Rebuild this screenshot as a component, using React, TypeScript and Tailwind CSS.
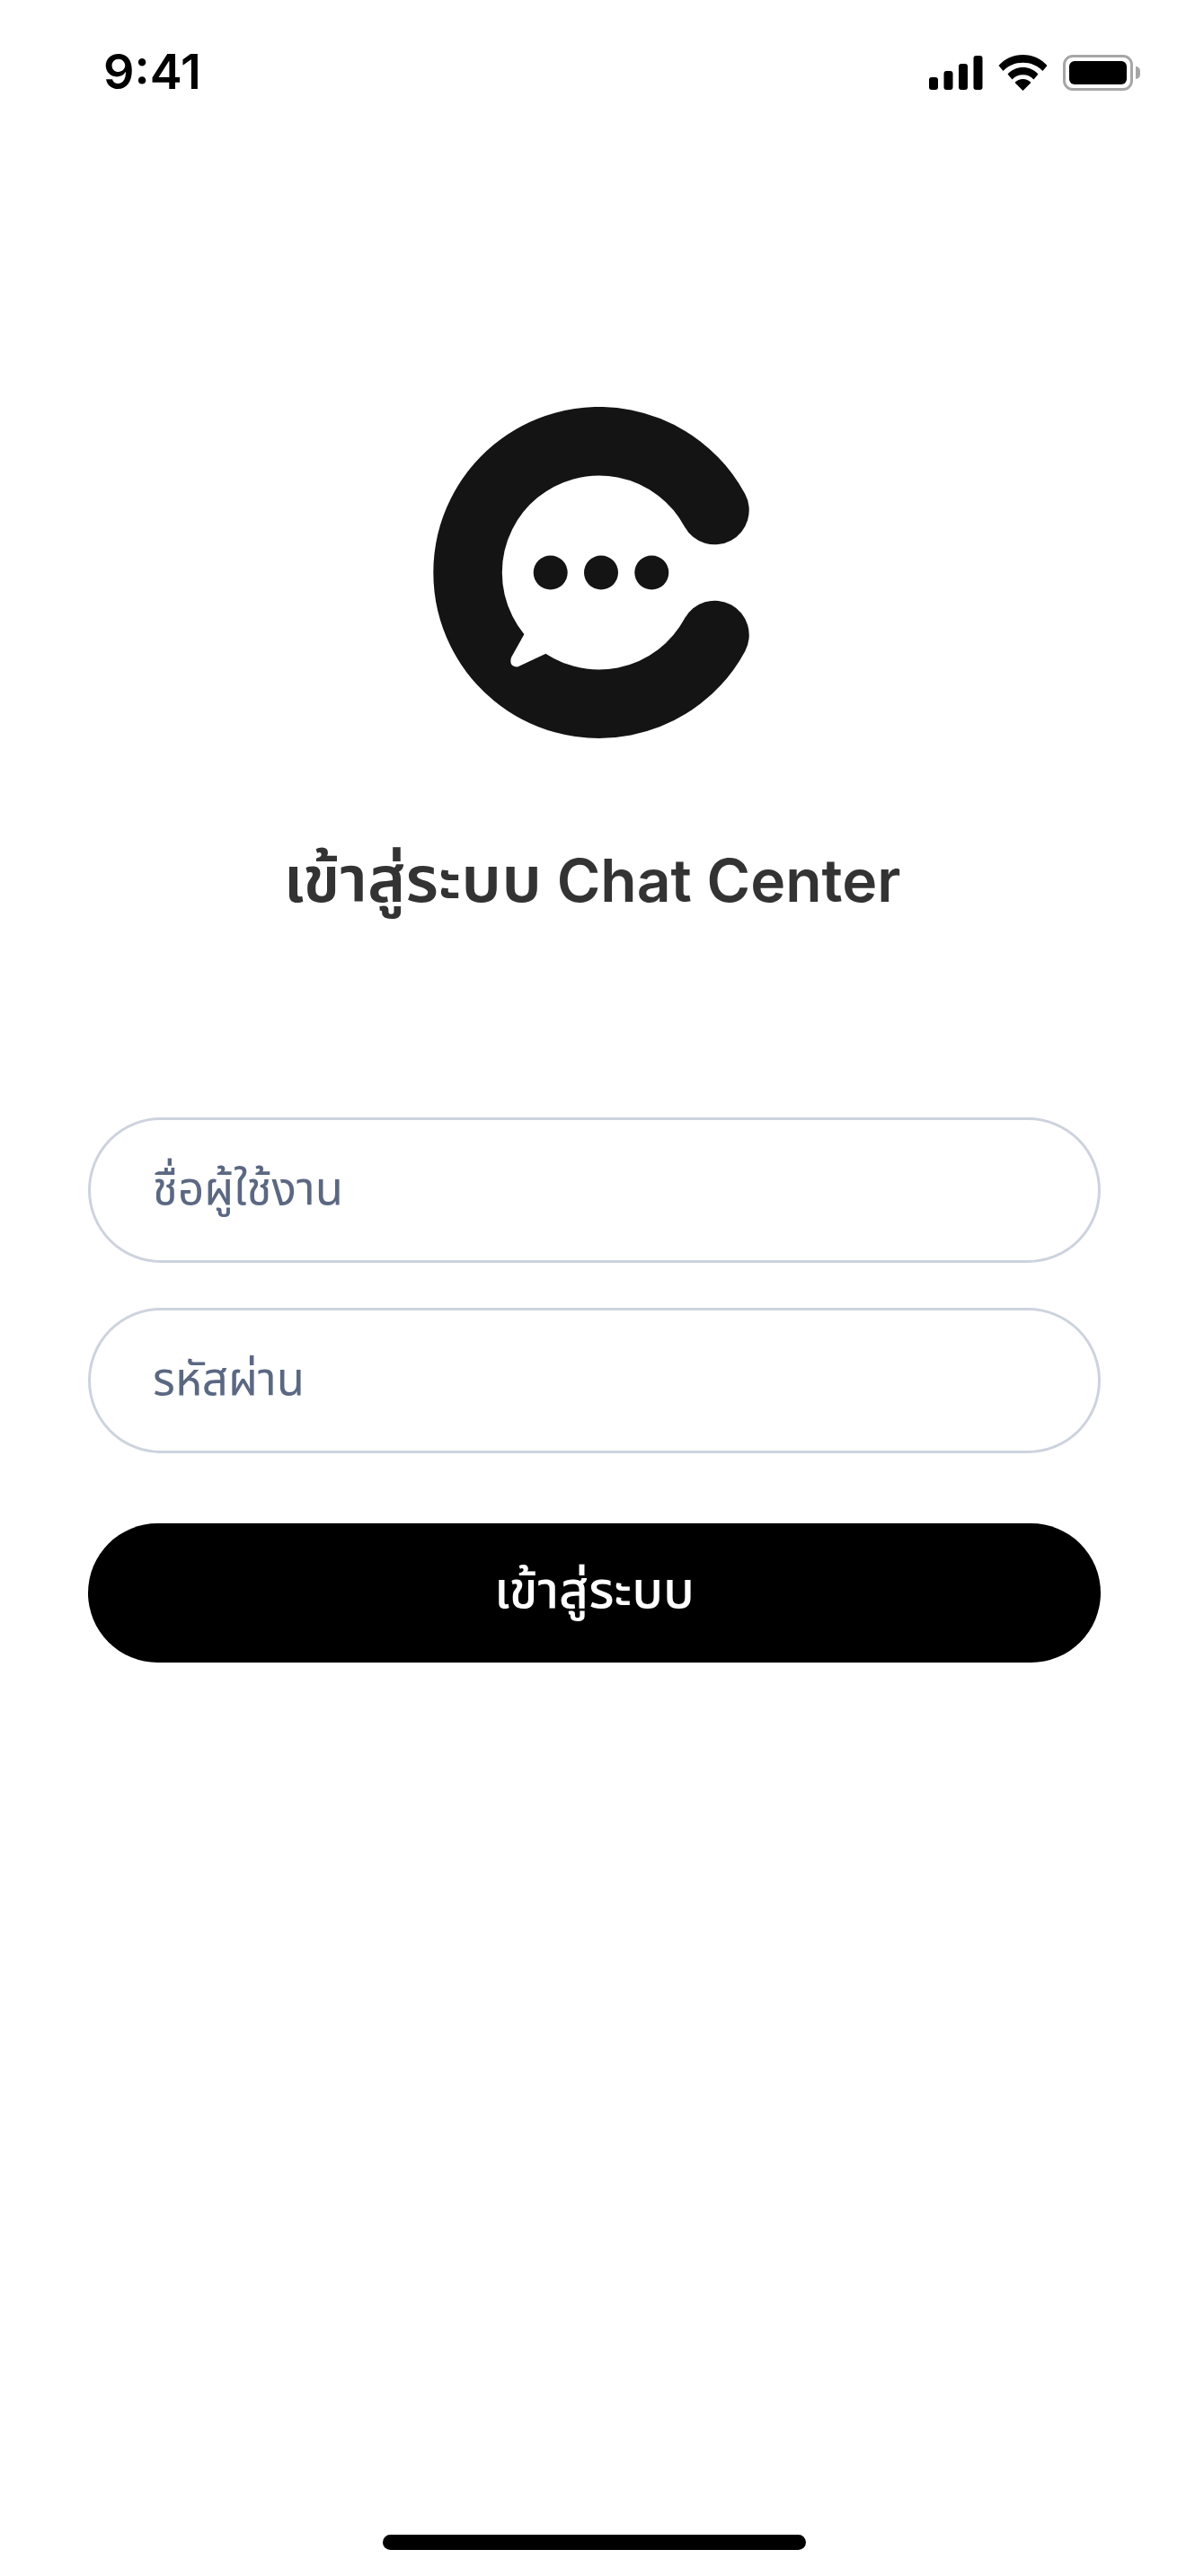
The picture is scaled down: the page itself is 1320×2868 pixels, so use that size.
const thai = "font-['Noto_Sans_Thai','Noto_Sans','Inter',sans-serif]";

function SignalIcon() {
  return (
    <svg width="60" height="38" viewBox="0 0 60 38" fill="#000">
      <rect x="0" y="24" width="10" height="14" rx="3" />
      <rect x="16.500" y="17" width="10" height="21" rx="3" />
      <rect x="33" y="9" width="10" height="29" rx="3" />
      <rect x="49.500" y="0" width="10" height="38" rx="3" />
    </svg>
  );
}

function WifiIcon() {
  return (
    <svg width="55" height="40" viewBox="0 0 55 40" fill="#000">
      <path d="M27.500 0C17 0 7.500 4 0.500 12L5.500 18C11 12 19 8.700 27.500 8.700C36 8.700 44 12 49.500 18L54.500 12C47.500 4 38 0 27.500 0Z" />
      <path d="M27.500 14C21 14 15 16.500 10.500 21.500L15.500 27.500C18.500 24 23 22.300 27.500 22.300C32 22.300 36.500 24 39.500 27.500L44.500 21.500C40 16.500 34 14 27.500 14Z" />
      <path d="M27.500 27C24 27 21 28.500 18.500 31L27.500 40L36.500 31C34 28.500 31 27 27.500 27Z" />
    </svg>
  );
}

function BatteryIcon() {
  return (
    <div className="flex items-center">
      <div className="w-[78px] h-[40px] rounded-[11px] border-[3px] border-[#a6a6a6] p-[4px]">
        <div className="w-full h-full rounded-[6px] bg-black" />
      </div>
      <div className="w-[5px] h-[14px] ml-[3px] rounded-r-full bg-[#a6a6a6]" />
    </div>
  );
}

function Logo() {
  return (
    <svg width="370" height="370" viewBox="482 453 370 370">
      <path
        d="M795.500 568 A146.250 146.250 0 1 0 795.500 707"
        fill="none"
        stroke="#141414"
        strokeWidth="76.500"
        strokeLinecap="round"
      />
      <path d="M583.500 706 L569 732 Q566 742 576 742.500 L607 728 L620 700 Z" fill="#fff" />
      <circle cx="612.700" cy="637.500" r="19" fill="#141414" />
      <circle cx="669" cy="637.500" r="19" fill="#141414" />
      <circle cx="725.300" cy="637.500" r="19" fill="#141414" />
    </svg>
  );
}

export default function App() {
  return (
    <div className={`w-[1320px] h-[2868px] bg-white flex flex-col ${thai}`}>
      <div className="h-[110px] flex items-start justify-between pl-[115px] pr-[51px] pt-[50px]">
        <span className="text-[54px] leading-[60px] font-semibold text-black font-['Inter',sans-serif]">9:41</span>
        <div className="flex items-center gap-[17px] pt-[11px]">
          <SignalIcon />
          <WifiIcon />
          <BatteryIcon />
        </div>
      </div>

      <div className="flex flex-col items-center pt-[343px]">
        <div className="ml-[14px]">
          <Logo />
        </div>
        <h1 className="mt-[114px] ml-[-2px] leading-[86px] font-semibold text-[#333333]">
          <span className="text-[72px]">เข้าสู่ระบบ</span>
          <span className="text-[66px] font-['Inter',sans-serif]"> Chat Center</span>
        </h1>
      </div>

      <form className="mt-[202px] pl-[98px] pr-[95px] flex flex-col gap-[50px]">
        <input
          placeholder="ชื่อผู้ใช้งาน"
          className="h-[162px] rounded-full border-[3.5px] border-[#cdd3de] px-[69px] text-[51px] outline-none placeholder:text-[#5b6882]"
        />
        <input
          placeholder="รหัสผ่าน"
          className="h-[162px] rounded-full border-[3.5px] border-[#cdd3de] px-[69px] text-[51px] outline-none placeholder:text-[#5b6882]"
        />
        <button
          type="button"
          className="mt-[28px] h-[155px] rounded-[78px] bg-black text-white text-[57px] font-medium"
        >
          เข้าสู่ระบบ
        </button>
      </form>

      <div className="mt-auto mb-[29px] ml-[426px] w-[471px] h-[17px] rounded-full bg-black" />
    </div>
  );
}
